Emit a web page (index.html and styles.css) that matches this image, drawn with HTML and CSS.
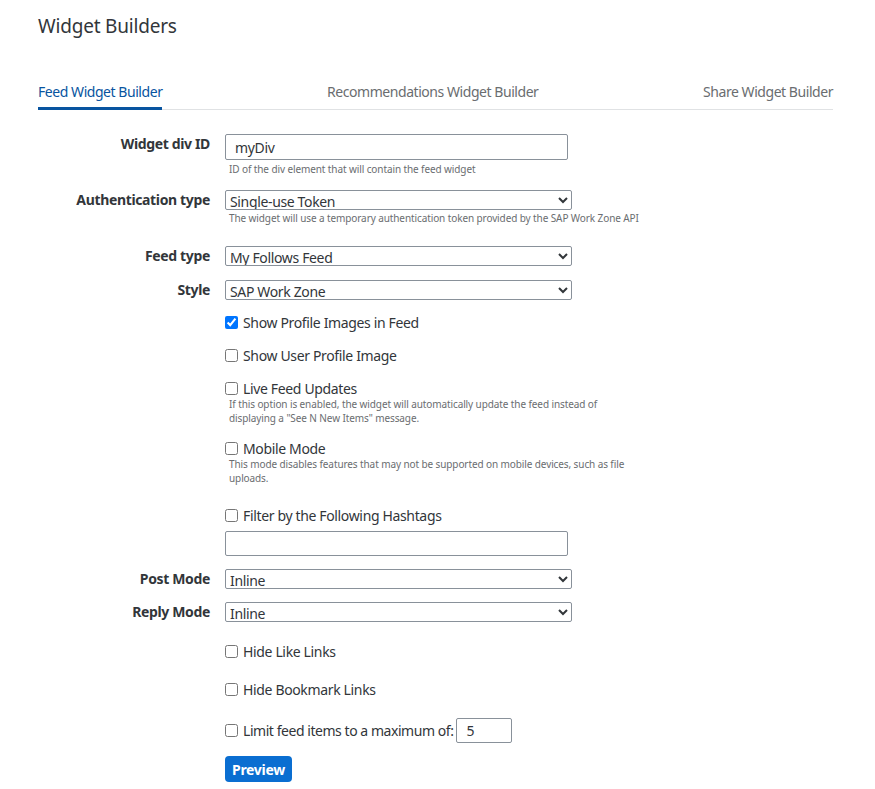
FILE: index.html
```html
<!DOCTYPE html>
<html lang="en">
<head>
<meta charset="utf-8">
<title>Widget Builders</title>
<link rel="stylesheet" href="styles.css">
</head>
<body>
<div class="page">
  <h1 class="title">Widget Builders</h1>
  <nav class="tabs">
    <span class="tab active">Feed Widget Builder</span>
    <span class="tab">Recommendations Widget Builder</span>
    <span class="tab">Share Widget Builder</span>
  </nav>
  <form class="form">
    <div class="row r-first">
      <label class="label">Widget div ID</label>
      <div class="field">
        <input class="text" type="text" value="myDiv">
        <div class="help help-input">ID of the div element that will contain the feed widget</div>
      </div>
    </div>
    <div class="row r-auth">
      <label class="label">Authentication type</label>
      <div class="field">
        <select class="sel"><option>Single-use Token</option></select>
        <div class="help help-sel">The widget will use a temporary authentication token provided by the SAP Work Zone API</div>
      </div>
    </div>
    <div class="row r-feed">
      <label class="label">Feed type</label>
      <div class="field"><select class="sel"><option>My Follows Feed</option></select></div>
    </div>
    <div class="row r-14">
      <label class="label">Style</label>
      <div class="field"><select class="sel"><option>SAP Work Zone</option></select></div>
    </div>
    <div class="row r-12">
      <span class="label"></span>
      <label class="check"><input type="checkbox" checked> Show Profile Images in Feed</label>
    </div>
    <div class="row r-13">
      <span class="label"></span>
      <label class="check"><input type="checkbox"> Show User Profile Image</label>
    </div>
    <div class="row r-13">
      <span class="label"></span>
      <div class="field">
        <label class="check"><input type="checkbox"> Live Feed Updates</label>
        <div class="help help-cb">If this option is enabled, the widget will automatically update the feed instead of<br>displaying a "See N New Items" message.</div>
      </div>
    </div>
    <div class="row r-13">
      <span class="label"></span>
      <div class="field">
        <label class="check"><input type="checkbox"> Mobile Mode</label>
        <div class="help help-cb">This mode disables features that may not be supported on mobile devices, such as file<br>uploads.</div>
      </div>
    </div>
    <div class="row r-filter">
      <span class="label"></span>
      <div class="field">
        <label class="check"><input type="checkbox"> Filter by the Following Hashtags</label>
        <input class="text text-hash" type="text">
      </div>
    </div>
    <div class="row r-13">
      <label class="label">Post Mode</label>
      <div class="field"><select class="sel"><option>Inline</option></select></div>
    </div>
    <div class="row r-13">
      <label class="label">Reply Mode</label>
      <div class="field"><select class="sel"><option>Inline</option></select></div>
    </div>
    <div class="row r-19">
      <span class="label"></span>
      <label class="check"><input type="checkbox"> Hide Like Links</label>
    </div>
    <div class="row r-18">
      <span class="label"></span>
      <label class="check"><input type="checkbox"> Hide Bookmark Links</label>
    </div>
    <div class="row r-19">
      <span class="label"></span>
      <label class="check check-limit"><input type="checkbox"> Limit feed items to a maximum of: <input class="text text-num" type="text" value="5"></label>
    </div>
    <div class="row r-13">
      <span class="label"></span>
      <button type="button" class="btn">Preview</button>
    </div>
  </form>
</div>
</body>
</html>
```
FILE: styles.css
```css
* { box-sizing: border-box; }
html, body { margin: 0; padding: 0; background: #fff; }
body {
  font-family: "Noto Sans", "Open Sans", sans-serif;
  color: #32363a;
  font-size: 14px;
  letter-spacing: -0.35px;
}
.page {
  width: 875px;
  padding: 14px 42px 0 38px;
}
.title {
  margin: 0;
  font-size: 19px;
  line-height: 24px;
  font-weight: normal;
  color: #32363a;
  letter-spacing: -0.2px;
}
.tabs {
  margin-top: 43px;
  display: flex;
  justify-content: space-between;
  border-bottom: 1px solid #e0e2e4;
}
.tab {
  font-size: 14px;
  line-height: 20px;
  padding-top: 1px;
  padding-bottom: 5px;
  color: #6a6d70;
  border-bottom: 3px solid transparent;
  margin-bottom: -1px;
  letter-spacing: -0.45px;
}
.tab.active {
  color: #0854a0;
  border-bottom-color: #0854a0;
}
.form { display: flex; flex-direction: column; }
.row { display: flex; align-items: flex-start; }
.label {
  flex: 0 0 172px;
  margin-right: 15px;
  text-align: right;
  font-weight: bold;
  line-height: 20px;
  color: #32363a;
}
.field { display: flex; flex-direction: column; align-items: flex-start; }
.r-first { margin-top: 24px; }
.r-auth { margin-top: 14px; }
.r-feed { margin-top: 21px; }
.r-14 { margin-top: 14px; }
.r-12 { margin-top: 12px; }
.r-13 { margin-top: 13px; }
.r-18 { margin-top: 18px; }
.r-19 { margin-top: 19px; }
.r-filter { margin-top: 20px; }
.text {
  width: 343px;
  height: 26px;
  border: 1px solid #89919a;
  border-radius: 2px;
  padding: 0 9px;
  font-family: inherit;
  font-size: 14px;
  letter-spacing: inherit;
  color: #32363a;
  background: #fff;
  outline: none;
}
.text-hash { margin-top: 6px; height: 25px; }
.text-num { width: 56px; height: 25px; margin-left: 3px; }
.sel {
  width: 347px;
  height: 20px;
  border: 1px solid #89919a;
  border-radius: 2px;
  padding: 0;
  font-family: inherit;
  font-size: 14px;
  letter-spacing: inherit;
  color: #32363a;
  background: #fff;
}
.help {
  font-size: 10px;
  line-height: 14px;
  color: #6a6d70;
  padding-left: 4px;
  letter-spacing: -0.1px;
}
.help-input { margin-top: 2px; }
.help-sel { margin-top: 1px; }
.help-cb { margin-top: -1px; }
.check {
  display: flex;
  align-items: center;
  height: 20px;
  line-height: 20px;
  padding-top: 1px;
  color: #32363a;
  white-space: nowrap;
}
.check input[type=checkbox] {
  width: 13px;
  height: 13px;
  margin: 0 5px 0 0;
}
.check-limit { height: 25px; padding-top: 0; letter-spacing: -0.45px; }
.btn {
  height: 26px;
  padding: 0 7px;
  border: none;
  border-radius: 4px;
  background: #0a6ed1;
  color: #fff;
  font-family: inherit;
  font-weight: bold;
  font-size: 14px;
  letter-spacing: -0.3px;
}
```
